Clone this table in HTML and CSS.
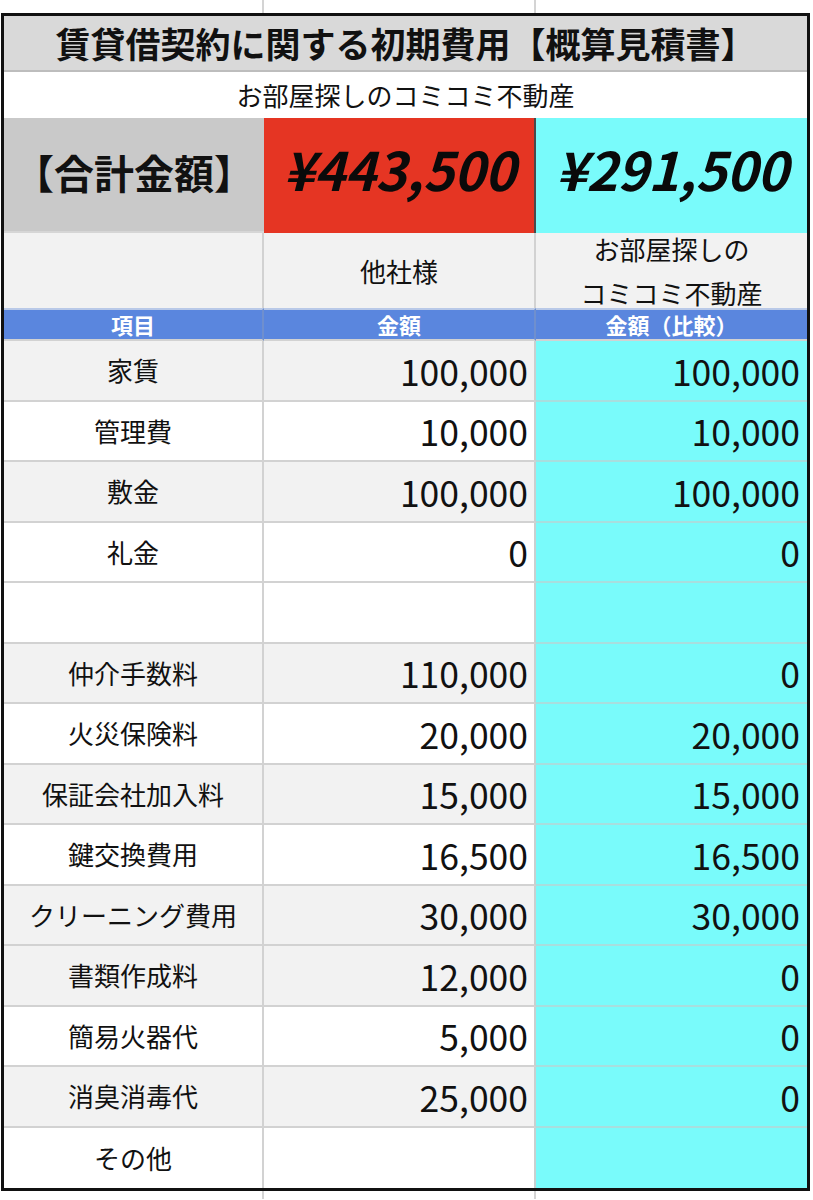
FILE: index.html
```html
<!DOCTYPE html>
<html lang="ja">
<head>
<meta charset="utf-8">
<title>賃貸借契約に関する初期費用【概算見積書】</title>
<link rel="stylesheet" href="styles.css">
</head>
<body>
<div class="sheet">
  <div class="strip strip-top"><div class="sc"></div><div class="sc"></div><div class="sc last"></div></div>
  <div class="box">
    <div class="title">賃貸借契約に関する初期費用【概算見積書】</div>
    <div class="subtitle">お部屋探しのコミコミ不動産</div>
    <div class="row totals">
      <div class="c c1">【合計金額】</div>
      <div class="c c2">¥443,500</div>
      <div class="c c3">¥291,500</div>
    </div>
    <div class="row labels">
      <div class="c c1"></div>
      <div class="c c2">他社様</div>
      <div class="c c3">お部屋探しの<br>コミコミ不動産</div>
    </div>
    <div class="row head">
      <div class="c c1">項目</div>
      <div class="c c2">金額</div>
      <div class="c c3">金額（比較）</div>
    </div>
    <div class="row data gray"><div class="c c1">家賃</div><div class="c c2">100,000</div><div class="c c3">100,000</div></div>
    <div class="row data"><div class="c c1">管理費</div><div class="c c2">10,000</div><div class="c c3">10,000</div></div>
    <div class="row data gray"><div class="c c1">敷金</div><div class="c c2">100,000</div><div class="c c3">100,000</div></div>
    <div class="row data"><div class="c c1">礼金</div><div class="c c2">0</div><div class="c c3">0</div></div>
    <div class="row data"><div class="c c1"></div><div class="c c2"></div><div class="c c3"></div></div>
    <div class="row data gray"><div class="c c1">仲介手数料</div><div class="c c2">110,000</div><div class="c c3">0</div></div>
    <div class="row data"><div class="c c1">火災保険料</div><div class="c c2">20,000</div><div class="c c3">20,000</div></div>
    <div class="row data gray"><div class="c c1">保証会社加入料</div><div class="c c2">15,000</div><div class="c c3">15,000</div></div>
    <div class="row data"><div class="c c1">鍵交換費用</div><div class="c c2">16,500</div><div class="c c3">16,500</div></div>
    <div class="row data gray"><div class="c c1">クリーニング費用</div><div class="c c2">30,000</div><div class="c c3">30,000</div></div>
    <div class="row data gray"><div class="c c1">書類作成料</div><div class="c c2">12,000</div><div class="c c3">0</div></div>
    <div class="row data"><div class="c c1">簡易火器代</div><div class="c c2">5,000</div><div class="c c3">0</div></div>
    <div class="row data gray"><div class="c c1">消臭消毒代</div><div class="c c2">25,000</div><div class="c c3">0</div></div>
    <div class="row data last"><div class="c c1">その他</div><div class="c c2"></div><div class="c c3"></div></div>
  </div>
  <div class="strip strip-bottom"><div class="sc"></div><div class="sc"></div><div class="sc last"></div></div>
</div>
</body>
</html>
```

FILE: styles.css
```css
* { box-sizing: border-box; }
html, body { margin: 0; padding: 0; background: #ffffff; }
body {
  font-family: "Noto Sans CJK JP", "Noto Sans", sans-serif;
  color: #111111;
  width: 813px;
}
.sheet { width: 813px; }

.strip {
  display: grid;
  grid-template-columns: 264px 272px 1fr;
}
.strip-top { height: 13px; }
.strip-bottom { height: 8px; }
.strip .sc { border-right: 2px solid #d4d4d4; }
.strip .sc.last { border-right: none; }

.box {
  margin-left: 1px;
  width: 809px;
  border: 3px solid #111111;
}

.title {
  height: 56px;
  background: #d9d9d9;
  border-bottom: 2px solid #bdbdbd;
  font-size: 35px;
  font-weight: 700;
  display: flex;
  align-items: center;
  justify-content: center;
  line-height: 1;
  padding-bottom: 2px;
}
.subtitle {
  height: 46px;
  background: #ffffff;
  font-size: 26px;
  display: flex;
  align-items: center;
  justify-content: center;
  line-height: 1;
}

.row {
  display: grid;
  grid-template-columns: 260px 272px 1fr;
  grid-template-rows: 100%;
}
.c {
  display: flex;
  align-items: center;
  justify-content: center;
  min-height: 0;
  border-right: 2px solid #d2d2d2;
  border-bottom: 2px solid #d2d2d2;
  line-height: 1;
  overflow: visible;
}
.c.c3 { border-right: none; }

/* totals */
.totals { height: 115px; }
.totals .c { border-bottom: 2px solid #d6d6d6; }
.totals .c1 {
  background: #c9c9c9;
  border-right: none;
  font-size: 40px;
  font-weight: 700;
  padding-bottom: 6px;
}
.totals .c2 {
  background: #e53523;
  border-right: 2px solid #4a4a4a;
  border-bottom: none;
}
.totals .c3 {
  background: #79fbfb;
  border-bottom: none;
}
.totals .c2, .totals .c3 {
  font-size: 53px;
  font-weight: 700;
  font-style: italic;
  color: #0a0a0a;
  letter-spacing: -0.5px;
  padding-bottom: 14px;
}

/* labels */
.labels { height: 75px; }
.labels .c {
  height: 75px;
  background: #f2f2f2;
  font-size: 26px;
  line-height: 44px;
  text-align: center;
  border-bottom: none;
}

/* header */
.head { height: 33px; }
.head .c {
  background: #5a86de;
  color: #ffffff;
  font-size: 22px;
  font-weight: 700;
  border-right: 2px solid #6f8fce;
  border-top: 2px solid #b9c9e8;
  border-bottom: 2px solid #d2d2d2;
  padding-bottom: 2px;
}
.head .c3 { border-right: none; }

/* data rows */
.data { height: 60.5px; }
.data .c { background: #ffffff; }
.data.gray .c1, .data.gray .c2 { background: #f2f2f2; }
.data .c1 { font-size: 26px; }
.data .c2, .data .c3 {
  justify-content: flex-end;
  font-size: 35.5px;
}
.data .c2 { padding-right: 6px; border-right: 2px solid #c8d0d0; }
.data .c3 {
  background: #79fbfb;
  padding-right: 7px;
  border-bottom: 2px solid #a8dede;
}
.data.gray .c3 { background: #79fbfb; }
.data.last .c { border-bottom: none; }
```
